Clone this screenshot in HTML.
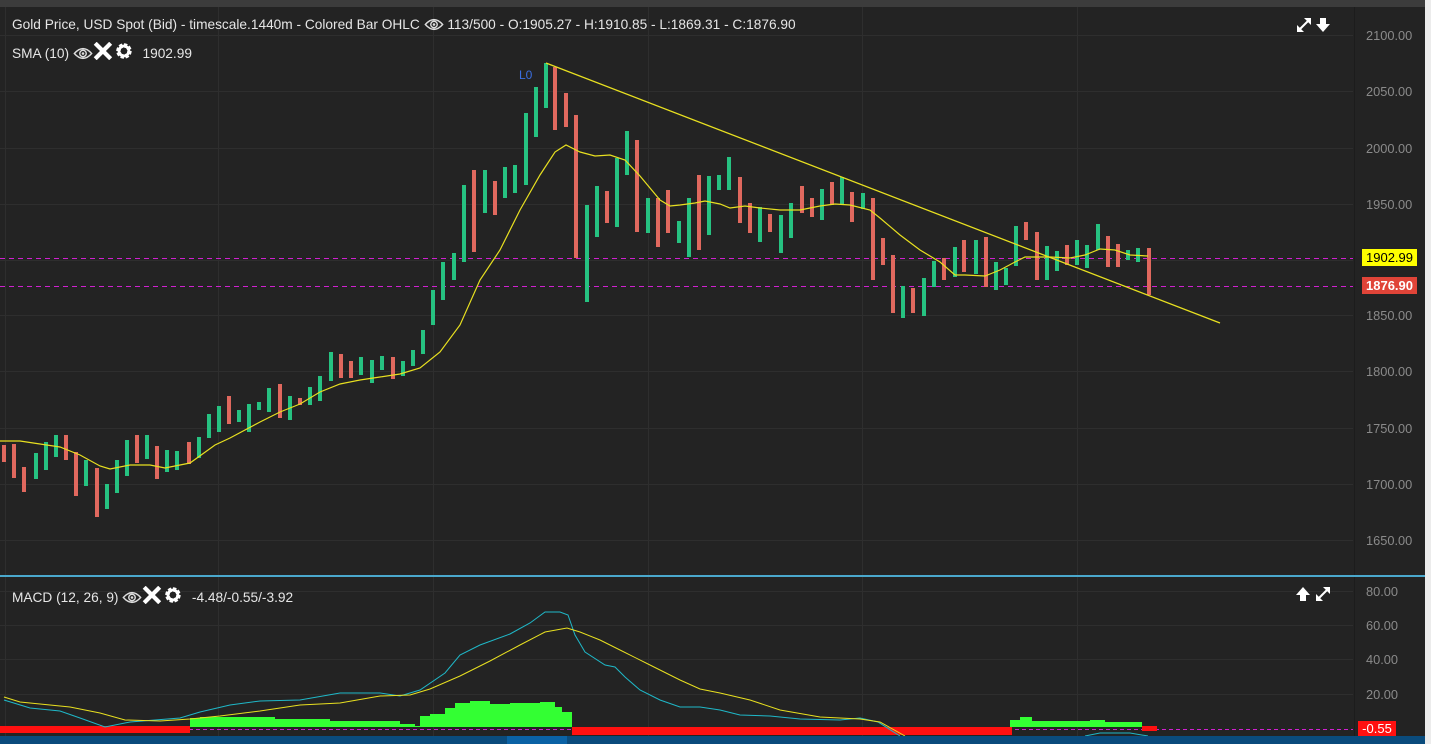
<!DOCTYPE html>
<html><head><meta charset="utf-8"><style>
html,body{margin:0;padding:0;background:#232323;width:1431px;height:744px;overflow:hidden;font-family:"Liberation Sans",Arial,sans-serif}
#top{position:absolute;left:0;top:0;width:1431px;height:7px;background:#3c3c3c}
#rs{position:absolute;left:1425px;top:0;width:6px;height:744px;background:#ececec}
.t{position:absolute;color:#e6e6e6;font-size:13.7px;letter-spacing:0;white-space:nowrap}
.ic{display:inline-block;vertical-align:-2px}
.ax{position:absolute;left:1366px;color:#8a8a8a;font-size:12.8px}
</style></head><body>
<div id="top"></div>
<svg id="s" width="1431" height="744" style="position:absolute;left:0;top:0"></svg>
<div id="rs"></div>
<div class="t" style="left:12px;top:17px">Gold Price, USD Spot (Bid) - timescale.1440m - Colored Bar OHLC <svg class="ic" width="20" height="13" viewBox="0 0 18 12"><path d="M1 6Q9-3 17 6Q9 15 1 6Z" fill="none" stroke="#ddd" stroke-width="1.3"/><circle cx="9" cy="6" r="3" fill="none" stroke="#ddd" stroke-width="1.3"/><circle cx="9" cy="6" r="1.2" fill="#ddd"/></svg> 113/500 - O:1905.27 - H:1910.85 - L:1869.31 - C:1876.90</div>
<div class="t" style="left:12px;top:42px">SMA (10) <svg class="ic" width="20" height="13" viewBox="0 0 18 12"><path d="M1 6Q9-3 17 6Q9 15 1 6Z" fill="none" stroke="#ddd" stroke-width="1.3"/><circle cx="9" cy="6" r="3" fill="none" stroke="#ddd" stroke-width="1.3"/><circle cx="9" cy="6" r="1.2" fill="#ddd"/></svg><svg class="ic" width="42" height="18" viewBox="0 0 38 16"><path d="M2 1L16 15M16 1L2 15" stroke="#fff" stroke-width="3.8"/><circle cx="28" cy="8" r="5" fill="none" stroke="#fff" stroke-width="4" stroke-dasharray="2.6 1.3"/><circle cx="28" cy="8" r="4.5" fill="none" stroke="#fff" stroke-width="2.5"/></svg>&nbsp; 1902.99</div>
<div class="t" style="left:12px;top:586px">MACD (12, 26, 9) <svg class="ic" width="20" height="13" viewBox="0 0 18 12"><path d="M1 6Q9-3 17 6Q9 15 1 6Z" fill="none" stroke="#ddd" stroke-width="1.3"/><circle cx="9" cy="6" r="3" fill="none" stroke="#ddd" stroke-width="1.3"/><circle cx="9" cy="6" r="1.2" fill="#ddd"/></svg><svg class="ic" width="42" height="18" viewBox="0 0 38 16"><path d="M2 1L16 15M16 1L2 15" stroke="#fff" stroke-width="3.8"/><circle cx="28" cy="8" r="5" fill="none" stroke="#fff" stroke-width="4" stroke-dasharray="2.6 1.3"/><circle cx="28" cy="8" r="4.5" fill="none" stroke="#fff" stroke-width="2.5"/></svg>&nbsp; -4.48/-0.55/-3.92</div>
<div style="position:absolute;left:519px;top:68px;color:#3a6ee0;font-size:12px">L0</div>
<script>
var s=document.getElementById('s'),h='';
function L(x1,y1,x2,y2,c,w,d){h+='<line x1="'+x1+'" y1="'+y1+'" x2="'+x2+'" y2="'+y2+'" stroke="'+c+'" stroke-width="'+(w||1)+'"'+(d?' stroke-dasharray="'+d+'"':'')+'/>';}
function R(x,y,w,hh,c){h+='<rect x="'+x+'" y="'+y+'" width="'+w+'" height="'+hh+'" fill="'+c+'"/>';}
function P(pts,c,w){h+='<polyline fill="none" stroke="'+c+'" stroke-width="'+(w||1)+'" points="'+pts.map(function(p){return p.join(',')}).join(' ')+'"/>';}
R(0,7,1425,737,'#232323');
var gy=[35,91,148,204,260,315,371,428,484,540];
gy.forEach(function(y){L(0,y+.5,1353,y+.5,'#2e2e2e');});
[5,218,433,648,862,1077].forEach(function(x){L(x+.5,7,x+.5,736,'#2e2e2e');});
[591,625,659,694].forEach(function(y){L(0,y+.5,1353,y+.5,'#2e2e2e');});
L(1354.5,7,1354.5,736,'#1c1c1c');
var G='#26c281',Rd='#e0685e';
var b=[[4,445,462,'r'],[14,444,478,'r'],[24,467,492,'r'],[36,453,479,'g'],[46,442,470,'g'],[56,435,457,'g'],[66,435,460,'r'],[76,452,496,'r'],[86,460,486,'g'],[97,468,517,'r'],[107,484,509,'g'],[117,460,493,'g'],[127,440,476,'g'],[137,435,463,'r'],[147,435,459,'g'],[157,446,479,'r'],[167,450,472,'g'],[177,451,470,'g'],[189,442,464,'r'],[199,437,458,'g'],[209,414,438,'g'],[219,406,432,'g'],[229,396,424,'r'],[239,410,422,'g'],[249,404,432,'g'],[259,402,410,'g'],[269,388,412,'g'],[280,384,418,'r'],[290,396,420,'g'],[300,398,405,'r'],[310,387,405,'g'],[320,376,401,'g'],[331,352,381,'g'],[341,354,378,'r'],[351,361,378,'r'],[361,357,375,'g'],[372,360,383,'g'],[382,356,370,'g'],[393,357,379,'r'],[403,361,376,'g'],[413,350,366,'g'],[423,330,354,'g'],[433,290,325,'g'],[443,262,300,'g'],[454,253,280,'g'],[464,185,262,'g'],[474,170,252,'r'],[485,170,213,'g'],[495,181,215,'r'],[505,167,198,'g'],[515,165,193,'g'],[526,113,185,'g'],[536,87,137,'g'],[546,63,108,'g'],[555,67,130,'r'],[566,93,127,'r'],[576,115,258,'r'],[587,205,302,'g'],[597,186,237,'g'],[607,191,223,'r'],[617,158,227,'g'],[627,131,175,'g'],[637,140,232,'r'],[648,198,233,'g'],[658,198,247,'r'],[668,190,233,'r'],[679,221,243,'g'],[689,198,257,'g'],[699,175,250,'r'],[709,176,235,'g'],[719,175,190,'g'],[729,157,190,'g'],[740,177,223,'r'],[750,203,233,'r'],[760,207,242,'g'],[770,214,232,'r'],[781,215,253,'g'],[791,203,238,'g'],[802,186,213,'r'],[812,198,217,'r'],[822,189,220,'g'],[832,182,205,'r'],[842,177,204,'g'],[852,192,222,'r'],[863,193,209,'g'],[873,198,280,'r'],[883,238,265,'r'],[893,255,313,'r'],[903,286,318,'g'],[913,288,313,'r'],[924,278,316,'g'],[934,261,287,'g'],[944,258,280,'r'],[955,247,277,'g'],[964,240,272,'r'],[976,240,274,'g'],[986,237,287,'r'],[996,262,290,'g'],[1006,268,285,'g'],[1016,226,266,'g'],[1026,222,240,'r'],[1037,232,280,'r'],[1047,246,280,'g'],[1057,251,271,'g'],[1067,245,265,'r'],[1077,240,265,'g'],[1087,245,268,'g'],[1098,224,250,'g'],[1108,236,267,'r'],[1118,244,267,'r'],[1128,250,260,'g'],[1138,248,262,'g'],[1149,248,295,'r']];
L(0,258.5,1353,258.5,'#d020d0',1,'5 4');L(0,286.5,1353,286.5,'#d020d0',1,'5 4');
b.forEach(function(a){R(a[0]-2,a[1],4,a[2]-a[1],a[3]=='g'?G:Rd);});
P([[0,441],[20,441],[60,447],[80,455],[100,466],[110,469],[130,465],[150,465],[165,468],[190,463],[215,445],[230,438],[260,422],[280,412],[300,404],[320,392],[340,384],[360,380],[380,377],[400,374],[420,368],[440,352],[460,325],[480,280],[500,250],[520,210],[540,175],[555,152],[566,145],[580,152],[595,156],[610,155],[625,160],[640,176],[660,200],[670,206],[680,205],[695,203],[705,201],[720,204],[730,208],[745,206],[760,208],[780,210],[800,210],[820,206],[835,204],[850,205],[870,210],[880,218],[900,235],[920,250],[940,262],[955,275],[965,275],[985,276],[1000,270],[1015,262],[1025,257],[1050,257],[1070,258],[1085,255],[1100,249],[1115,250],[1130,255],[1148,256]],'#e8e020',1.2);
L(546,63,1220,323,'#e8e020',1.3);
R(0,575,1425,2,'#4aa8cc');
L(0,729.5,1353,729.5,'#d020d0',1,'4 3');
R(0,726,190,7,'#ff1010');R(572,727,440,8,'#ff1010');R(1142,726,15,5,'#ff1010');
var hg=[[190,200,718],[200,275,717],[275,330,719],[330,400,721],[400,415,724],[415,420,726],[420,430,716],[430,445,714],[445,455,708],[455,470,703],[470,490,701],[490,510,704],[510,540,703],[540,555,702],[555,562,707],[562,572,712],[1010,1020,720],[1020,1032,717],[1032,1090,721],[1090,1105,720],[1105,1142,722]];
hg.forEach(function(a){R(a[0],a[2],a[1]-a[0],727-a[2],'#33ff33');});
P([[4,700],[30,708],[60,711],[80,718],[105,727],[130,722],[180,718],[200,712],[230,705],[260,701],[300,700],[340,693],[380,693],[400,696],[420,690],[445,673],[460,655],[480,645],[510,634],[530,623],[545,612],[560,612],[568,615],[575,635],[585,652],[605,665],[615,667],[625,677],[640,690],[660,700],[680,707],[700,707],[720,710],[740,715],[770,716],[800,719],[840,720],[860,718],[878,722],[900,736]],'#1fb8c8',1);
P([[4,697],[20,702],[70,707],[100,713],[125,720],[160,721],[190,719],[220,716],[260,711],[300,705],[340,703],[380,696],[410,695],[430,689],[460,676],[490,661],[520,645],[545,632],[567,628],[580,632],[600,640],[620,650],[650,665],[680,680],[700,689],[720,693],[750,700],[780,710],[820,717],[860,719],[880,722],[905,736]],'#e8e020',1);
P([[1085,736],[1100,733],[1130,733],[1148,736]],'#1fb8c8',1);
function exp(x,y){h+='<g fill="#fff" stroke="#fff" stroke-width="2"><line x1="'+(x+3)+'" y1="'+(y+11)+'" x2="'+(x+11)+'" y2="'+(y+3)+'"/></g><polygon fill="#fff" points="'+(x+7)+','+(y)+' '+(x+14)+','+y+' '+(x+14)+','+(y+7)+'"/><polygon fill="#fff" points="'+x+','+(y+7)+' '+x+','+(y+14)+' '+(x+7)+','+(y+14)+'"/>';}
exp(1297,18);
h+='<polygon fill="#fff" points="1320,18 1326,18 1326,24 1330,24 1323,32 1316,24 1320,24"/>';
h+='<polygon fill="#fff" points="1303,587 1310,595 1306,595 1306,601 1300,601 1300,595 1296,595"/>';
exp(1316,587);
R(0,736,1425,8,'#0a4b7c');R(507,736,60,8,'#0a62a5');
s.innerHTML=h;
</script>
<div class="ax" style="top:28px">2100.00</div>
<div class="ax" style="top:84px">2050.00</div>
<div class="ax" style="top:141px">2000.00</div>
<div class="ax" style="top:197px">1950.00</div>
<div class="ax" style="top:308px">1850.00</div>
<div class="ax" style="top:364px">1800.00</div>
<div class="ax" style="top:421px">1750.00</div>
<div class="ax" style="top:477px">1700.00</div>
<div class="ax" style="top:533px">1650.00</div>
<div style="position:absolute;left:1362px;top:249px;width:55px;height:17px;background:#ffff00;color:#000;font-size:13px;text-align:center;line-height:17px">1902.99</div>
<div style="position:absolute;left:1362px;top:277px;width:55px;height:17px;background:#e04438;color:#fff;font-size:13px;font-weight:bold;text-align:center;line-height:17px">1876.90</div>
<div class="ax" style="top:584px">80.00</div>
<div class="ax" style="top:618px">60.00</div>
<div class="ax" style="top:652px">40.00</div>
<div class="ax" style="top:687px">20.00</div>
<div style="position:absolute;left:1358px;top:721px;width:38px;height:15px;background:#ff1010;color:#fff;font-size:13px;text-align:center;line-height:16px">-0.55</div>
</body></html>
